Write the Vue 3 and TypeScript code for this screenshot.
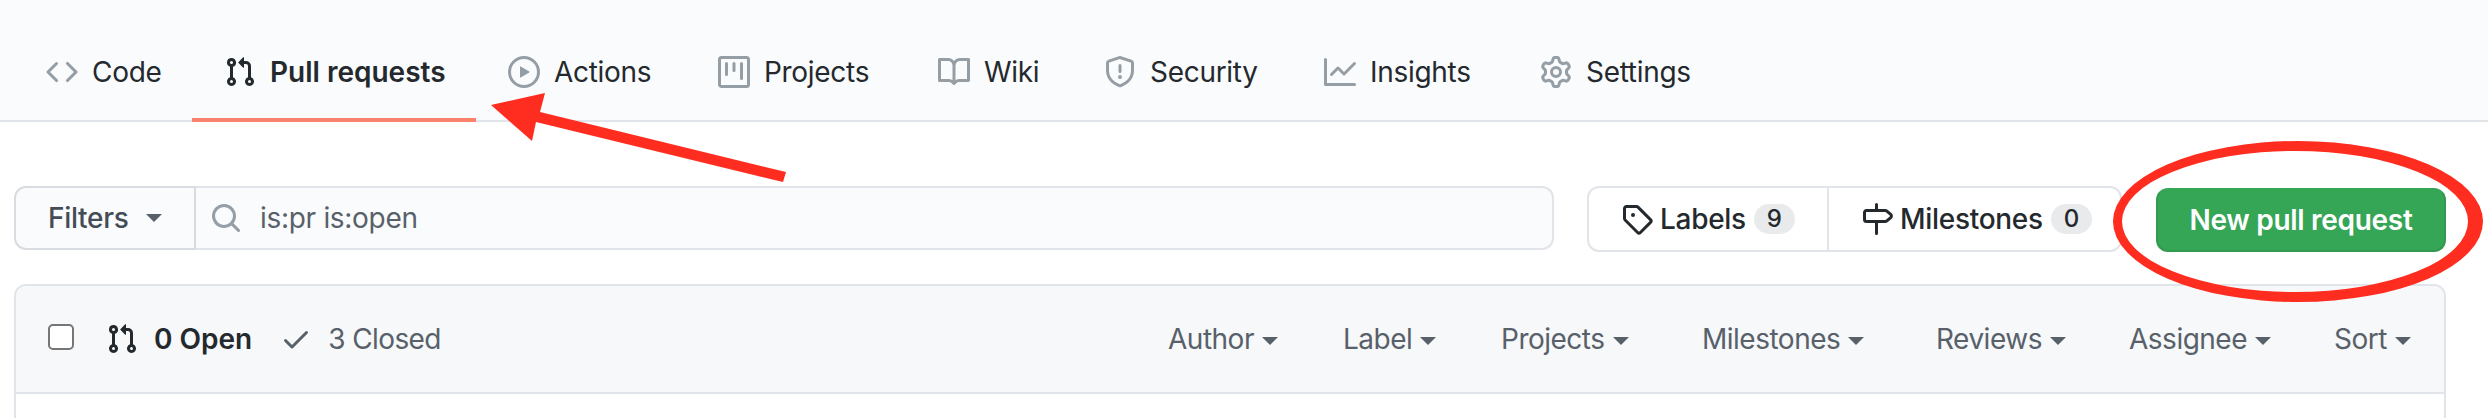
<template>
  <div class="page">
    <nav class="tabs">
      <a v-for="tab in tabs" :key="tab.label" class="tab" :class="{ selected: tab.selected }">
        <svg class="tab-icon" viewBox="0 0 16 16" width="32" height="32"><path :d="tab.icon" /></svg>
        <span>{{ tab.label }}</span>
      </a>
    </nav>

    <main class="content">
      <div class="toolbar">
        <div class="filter">
          <div class="filter-btn">Filters <i class="caret"></i></div>
          <div class="filter-input">
            <svg viewBox="0 0 16 16" width="32" height="32"><path :d="searchIcon" /></svg>
            <span>is:pr is:open</span>
          </div>
        </div>
        <div class="labels-group">
          <div class="group-btn first">
            <svg viewBox="0 0 16 16" width="32" height="32"><path :d="tagIcon" /></svg>
            <span>Labels</span><em class="counter">9</em>
          </div>
          <div class="group-btn">
            <svg viewBox="0 0 16 16" width="32" height="32"><path :d="milestoneIcon" /></svg>
            <span>Milestones</span><em class="counter">0</em>
          </div>
        </div>
        <button class="new-pr">New pull request</button>
      </div>

      <div class="box">
        <div class="box-header">
          <span class="check"></span>
          <svg class="open-icon" viewBox="0 0 16 16" width="32" height="32"><path :d="prIcon" /></svg>
          <span class="open">0 Open</span>
          <svg class="closed-icon" viewBox="0 0 16 16" width="32" height="32"><path :d="checkIcon" /></svg>
          <span class="closed">3 Closed</span>
          <div class="sorts">
            <span v-for="s in sorts" :key="s" class="sort">{{ s }}<i class="caret"></i></span>
          </div>
        </div>
      </div>
    </main>

    <!-- red annotations on top of the screenshot -->
    <svg class="marks" viewBox="0 0 2488 418" width="2488" height="418">
      <polygon points="491,105 545,93 540,112 786,172 783,182 536,122 532,141" fill="#ff2d1f" />
      <path
        fill="#ff2d1f"
        fill-rule="evenodd"
        d="M2113 221.5a185 80.5 0 1 0 370 0a185 80.5 0 1 0 -370 0zM2122 221.5a173 70.5 0 1 1 346 0a173 70.5 0 1 1 -346 0z"
      />
    </svg>
  </div>
</template>

<script setup lang="ts">
const prIcon =
  'M7.177 3.073L9.573.677A.25.25 0 0110 .854v4.792a.25.25 0 01-.427.177L7.177 3.427a.25.25 0 010-.354zM3.75 2.5a.75.75 0 100 1.5.75.75 0 000-1.5zm-2.25.75a2.25 2.25 0 113 2.122v5.256a2.251 2.251 0 11-1.5 0V5.372A2.25 2.25 0 011.5 3.25zM11 2.5h-1V4h1a1 1 0 011 1v5.628a2.251 2.251 0 101.5 0V5A2.5 2.5 0 0011 2.5zm1 10.25a.75.75 0 111.5 0 .75.75 0 01-1.5 0zM3.75 12a.75.75 0 100 1.5.75.75 0 000-1.5z'
const searchIcon =
  'M11.5 7a4.499 4.499 0 11-8.998 0A4.499 4.499 0 0111.5 7zm-.82 4.74a6 6 0 111.06-1.06l3.04 3.04a.75.75 0 11-1.06 1.06l-3.04-3.04z'
const tagIcon =
  'M2.5 7.775V2.75a.25.25 0 01.25-.25h5.025a.25.25 0 01.177.073l6.25 6.25a.25.25 0 010 .354l-5.025 5.025a.25.25 0 01-.354 0l-6.25-6.25a.25.25 0 01-.073-.177zm-1.5 0V2.75C1 1.784 1.784 1 2.75 1h5.025c.464 0 .91.184 1.238.513l6.25 6.25a1.75 1.75 0 010 2.474l-5.026 5.026a1.75 1.75 0 01-2.474 0l-6.25-6.25A1.75 1.75 0 011 7.775zM6 5a1 1 0 100 2 1 1 0 000-2z'
const milestoneIcon =
  'M7.75 0a.75.75 0 01.75.75V3h3.634c.414 0 .814.147 1.13.414l2.07 1.75a1.75 1.75 0 010 2.672l-2.07 1.75a1.75 1.75 0 01-1.13.414H8.5v5.25a.75.75 0 11-1.5 0V10H2.75A1.75 1.75 0 011 8.25v-3.5C1 3.784 1.784 3 2.75 3H7V.75A.75.75 0 017.75 0zm0 8.5h4.384a.25.25 0 00.161-.06l2.07-1.75a.25.25 0 000-.38l-2.07-1.75a.25.25 0 00-.161-.06H2.75a.25.25 0 00-.25.25v3.5c0 .138.112.25.25.25h5z'
const checkIcon =
  'M13.78 4.22a.75.75 0 010 1.06l-7.25 7.25a.75.75 0 01-1.06 0L2.22 9.28a.75.75 0 011.06-1.06L6 10.94l6.72-6.72a.75.75 0 011.06 0z'

const tabs = [
  { label: 'Code', icon: 'M4.72 3.22a.75.75 0 011.06 1.06L2.06 8l3.72 3.72a.75.75 0 11-1.06 1.06L.47 8.53a.75.75 0 010-1.06l4.25-4.25zm6.56 0a.75.75 0 10-1.06 1.06L13.94 8l-3.72 3.72a.75.75 0 101.06 1.06l4.25-4.25a.75.75 0 000-1.06l-4.25-4.25z' },
  { label: 'Pull requests', selected: true, icon: prIcon },
  { label: 'Actions', icon: 'M1.5 8a6.5 6.5 0 1113 0 6.5 6.5 0 01-13 0zM8 0a8 8 0 100 16A8 8 0 008 0zM6.379 5.227A.25.25 0 006 5.442v5.117a.25.25 0 00.379.214l4.264-2.559a.25.25 0 000-.428L6.379 5.227z' },
  { label: 'Projects', icon: 'M1.75 0A1.75 1.75 0 000 1.75v12.5C0 15.216.784 16 1.75 16h12.5A1.75 1.75 0 0016 14.25V1.75A1.75 1.75 0 0014.25 0H1.75zM1.5 1.75a.25.25 0 01.25-.25h12.5a.25.25 0 01.25.25v12.5a.25.25 0 01-.25.25H1.75a.25.25 0 01-.25-.25V1.75zM11.75 3a.75.75 0 00-.75.75v7.5a.75.75 0 001.5 0v-7.5a.75.75 0 00-.75-.75zm-8.25.75a.75.75 0 011.5 0v5.5a.75.75 0 01-1.5 0v-5.5zM8 3a.75.75 0 00-.75.75v3.5a.75.75 0 001.5 0v-3.5A.75.75 0 008 3z' },
  { label: 'Wiki', icon: 'M0 1.75A.75.75 0 01.75 1h4.253c1.227 0 2.317.59 3 1.501A3.744 3.744 0 0111.006 1h4.245a.75.75 0 01.75.75v10.5a.75.75 0 01-.75.75h-4.507a2.25 2.25 0 00-1.591.659l-.622.621a.75.75 0 01-1.06 0l-.622-.621A2.25 2.25 0 005.258 13H.75a.75.75 0 01-.75-.75V1.75zm8.755 3a2.25 2.25 0 012.25-2.25H14.5v9h-3.757c-.71 0-1.4.201-1.992.572l.004-7.322zm-1.504 7.324l.004-5.073-.002-2.253A2.25 2.25 0 005.003 2.5H1.5v9h3.757a3.75 3.75 0 011.994.574z' },
  { label: 'Security', icon: 'M7.467.133a1.75 1.75 0 011.066 0l5.25 1.68A1.75 1.75 0 0115 3.48V7c0 1.566-.32 3.182-1.303 4.682-.983 1.498-2.585 2.813-5.032 3.855a1.7 1.7 0 01-1.33 0c-2.447-1.042-4.049-2.357-5.032-3.855C1.32 10.182 1 8.566 1 7V3.48a1.75 1.75 0 011.217-1.667l5.25-1.68zm.61 1.429a.25.25 0 00-.153 0l-5.25 1.68a.25.25 0 00-.174.238V7c0 1.358.275 2.666 1.057 3.86.784 1.194 2.121 2.34 4.366 3.297a.2.2 0 00.154 0c2.245-.956 3.582-2.104 4.366-3.298C13.225 9.666 13.5 8.36 13.5 7V3.48a.25.25 0 00-.174-.237l-5.25-1.68zM9 10.5a1 1 0 11-2 0 1 1 0 012 0zm-.25-5.75a.75.75 0 10-1.5 0v3a.75.75 0 001.5 0v-3z' },
  { label: 'Insights', icon: 'M1.5 1.75a.75.75 0 00-1.5 0v12.5c0 .414.336.75.75.75h14.5a.75.75 0 000-1.5H1.5V1.75zm14.28 2.53a.75.75 0 00-1.06-1.06L10 7.94 7.53 5.47a.75.75 0 00-1.06 0L3.22 8.72a.75.75 0 001.06 1.06L7 7.06l2.47 2.47a.75.75 0 001.06 0l5.25-5.25z' },
  { label: 'Settings', icon: 'M7.429 1.525a6.593 6.593 0 011.142 0c.036.003.108.036.137.146l.289 1.105c.147.56.55.967.997 1.189.174.086.341.183.501.29.417.278.97.423 1.53.27l1.102-.303c.11-.03.175.016.195.046.219.31.41.641.573.989.014.031.022.11-.059.19l-.815.806c-.411.406-.562.957-.53 1.456a4.588 4.588 0 010 .582c-.032.499.119 1.05.53 1.456l.815.806c.08.08.073.159.059.19a6.494 6.494 0 01-.573.99c-.02.029-.086.074-.195.045l-1.103-.303c-.559-.153-1.112-.008-1.529.27-.16.107-.327.204-.5.29-.449.222-.851.628-.998 1.189l-.289 1.105c-.029.11-.101.143-.137.146a6.613 6.613 0 01-1.142 0c-.036-.003-.108-.037-.137-.146l-.289-1.105c-.147-.56-.55-.967-.997-1.189a4.502 4.502 0 01-.501-.29c-.417-.278-.97-.423-1.53-.27l-1.102.303c-.11.03-.175-.016-.195-.046a6.492 6.492 0 01-.573-.989c-.014-.031-.022-.11.059-.19l.815-.806c.411-.406.562-.957.53-1.456a4.587 4.587 0 010-.582c.032-.499-.119-1.05-.53-1.456l-.815-.806c-.08-.08-.073-.159-.059-.19a6.44 6.44 0 01.573-.99c.02-.029.086-.075.195-.045l1.103.303c.559.153 1.112.008 1.529-.27.16-.107.327-.204.5-.29.449-.222.851-.628.998-1.189l.289-1.105c.029-.11.101-.143.137-.146zM8 0c-.236 0-.47.01-.701.03-.743.065-1.29.615-1.458 1.261l-.29 1.106c-.017.066-.078.158-.211.224a5.994 5.994 0 00-.668.386c-.123.082-.233.09-.3.071L3.27 2.776c-.644-.177-1.392.02-1.82.63a7.977 7.977 0 00-.704 1.217c-.315.675-.111 1.422.363 1.891l.815.806c.05.048.098.147.088.294a6.084 6.084 0 000 .772c.01.147-.038.246-.088.294l-.815.806c-.474.469-.678 1.216-.363 1.891.2.428.436.835.704 1.218.428.609 1.176.806 1.82.63l1.103-.303c.066-.019.176-.011.299.071.213.143.436.272.668.386.133.066.194.158.212.224l.289 1.106c.169.646.715 1.196 1.458 1.26a8.094 8.094 0 001.402 0c.743-.064 1.29-.614 1.458-1.26l.29-1.106c.017-.066.078-.158.211-.224a5.98 5.98 0 00.668-.386c.123-.082.233-.09.3-.071l1.102.302c.644.177 1.392-.02 1.82-.63.268-.382.505-.789.704-1.217.315-.675.111-1.422-.364-1.891l-.814-.806c-.05-.048-.098-.147-.088-.294a6.1 6.1 0 000-.772c-.01-.147.039-.246.088-.294l.814-.806c.475-.469.679-1.216.364-1.891a7.992 7.992 0 00-.704-1.218c-.428-.609-1.176-.806-1.82-.63l-1.103.303c-.066.019-.176.011-.299-.071a5.991 5.991 0 00-.668-.386c-.133-.066-.194-.158-.212-.224L10.16 1.29C9.99.645 9.444.095 8.701.031A8.094 8.094 0 008 0zm1.5 8a1.5 1.5 0 11-3 0 1.5 1.5 0 013 0zM11 8a3 3 0 11-6 0 3 3 0 016 0z' },
]

const sorts = ['Author', 'Label', 'Projects', 'Milestones', 'Reviews', 'Assignee', 'Sort']
</script>

<style scoped>
.page {
  position: relative;
  width: 2488px;
  height: 418px;
  overflow: hidden;
  background: #fff;
  color: #24292e;
  font-family: Inter, "Liberation Sans", sans-serif;
  font-size: 28px;
  letter-spacing: -0.3px;
  white-space: nowrap;
}

svg path {
  fill: currentColor;
  fill-rule: evenodd;
}

.marks path {
  fill: #ff2d1f;
}

.tabs {
  display: grid;
  grid-template-columns: 178px 284px 210px 220px 166px 220px 216px auto;
  justify-content: start;
  height: 122px;
  box-sizing: border-box;
  padding-left: 14px;
  background: #fafbfc;
  border-bottom: 2px solid #e1e4e8;
}

.tab {
  display: flex;
  align-items: center;
  gap: 14px;
  height: 122px;
  box-sizing: border-box;
  padding: 26px 32px 0;
  border-bottom: 4px solid transparent;
}

.tab-icon {
  flex: none;
  color: #959da5;
}

.tab.selected {
  font-weight: 600;
  letter-spacing: 0;
  border-bottom-color: #f9826c;
}

.tab.selected .tab-icon {
  color: #24292e;
}

.content {
  padding: 64px 42px 0 14px;
}

.toolbar {
  display: flex;
  align-items: flex-start;
}

.filter {
  display: flex;
  flex: 1;
  height: 64px;
  margin-right: 33px;
  background: #fafbfc;
  border-radius: 12px;
}

.filter-btn {
  display: flex;
  align-items: center;
  gap: 17px;
  width: 182px;
  box-sizing: border-box;
  padding-left: 32px;
  border: 2px solid #d8dbdf;
  border-radius: 12px 0 0 12px;
  color: #444d56;
  font-weight: 500;
}

.filter-btn .caret {
  color: #586069;
}

.filter-input {
  display: flex;
  flex: 1;
  align-items: center;
  gap: 18px;
  padding-left: 14px;
  color: #586069;
  border: 2px solid #e1e4e8;
  border-left: 0;
  border-radius: 0 12px 12px 0;
}

.filter-input svg {
  color: #959da5;
}

.caret {
  display: inline-block;
  border: 8px solid transparent;
  border-top-color: currentColor;
  border-bottom: 0;
  vertical-align: middle;
}

.labels-group {
  display: flex;
  width: 535px;
  height: 66px;
  box-sizing: border-box;
  border: 2px solid #e1e4e8;
  border-radius: 12px;
}

.group-btn {
  display: flex;
  flex: 1;
  align-items: center;
  padding-left: 32px;
  font-weight: 500;
}

.group-btn.first {
  flex: 0 0 240px;
  box-sizing: border-box;
  border-right: 2px solid #e1e4e8;
}

.group-btn svg {
  margin-right: 7px;
}

.counter {
  margin-left: 8px;
  padding: 0 13px;
  border-radius: 20px;
  background: #e9eaec;
  font-style: normal;
  font-size: 24px;
  line-height: 30px;
  letter-spacing: 0;
}

.new-pr {
  width: 290px;
  height: 64px;
  margin: 2px 0 0 34px;
  border: 2px solid #32994f;
  border-top-color: #35a556;
  border-radius: 12px;
  background: #35a556;
  color: #fff;
  font: 600 28px Inter, "Liberation Sans", sans-serif;
  letter-spacing: -0.3px;
}

.box {
  margin-top: 32px;
  height: 200px;
  border: 2px solid #e1e4e8;
  border-radius: 12px 12px 0 0;
}

.box-header {
  display: flex;
  align-items: center;
  height: 108px;
  box-sizing: border-box;
  padding: 0 31px 0 32px;
  background: #f6f8fa;
  border-bottom: 2px solid #e1e4e8;
  border-radius: 12px 12px 0 0;
}

.check {
  width: 26px;
  height: 26px;
  box-sizing: border-box;
  margin: -4px 32px 0 0;
  border: 2px solid #767676;
  border-radius: 5px;
  background: #fff;
}

.open {
  font-weight: 600;
  letter-spacing: 0;
  margin: 0 28px 0 16px;
}

.closed-icon,
.closed {
  color: #586069;
}

.closed {
  margin-left: 16px;
  letter-spacing: -0.6px;
}

.sorts {
  display: grid;
  grid-template-columns: 175px 158px 201px 234px 193px 205px 79px;
  margin-left: auto;
  color: #586069;
  letter-spacing: -0.5px;
}

.sort .caret {
  margin-left: 8px;
}

.marks {
  position: absolute;
  left: 0;
  top: 0;
  pointer-events: none;
}
</style>

<style>
html,
body {
  margin: 0;
  background: #fff;
}
</style>
